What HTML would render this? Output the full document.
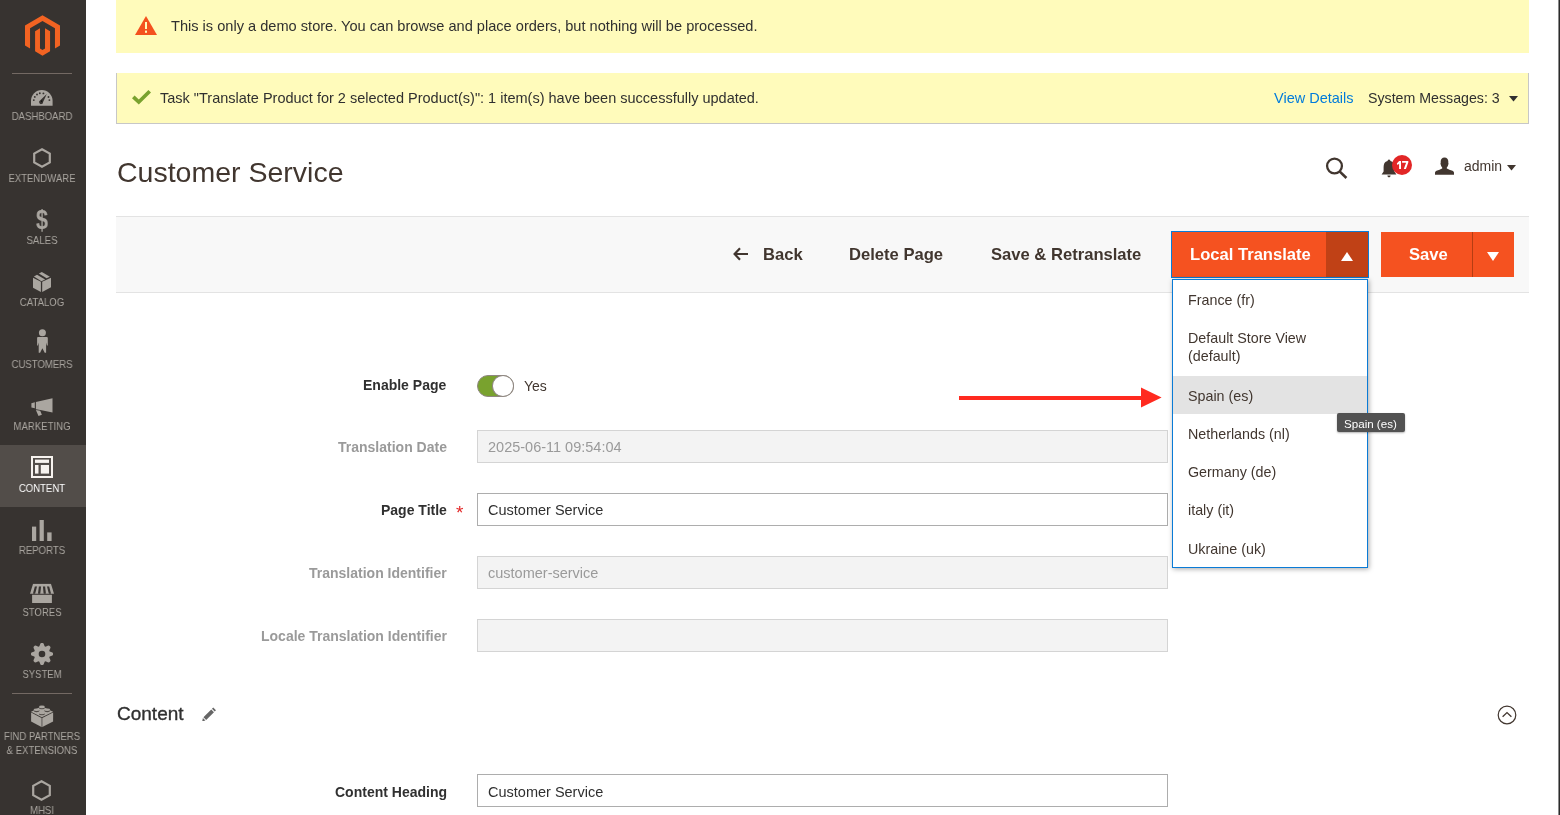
<!DOCTYPE html>
<html><head><meta charset="utf-8"><title>Customer Service</title>
<style>
html,body{margin:0;padding:0;}
body{width:1560px;height:815px;overflow:hidden;position:relative;background:#fff;font-family:"Liberation Sans", sans-serif;}
.t{position:absolute;line-height:1;white-space:nowrap;will-change:transform;}
.r{position:absolute;}
</style></head><body>
<div class="r" style="left:0px;top:0px;width:86px;height:815px;background:#373330;"></div>
<svg class="r" style="left:25px;top:15px;" width="35" height="41" viewBox="0 0 25 28.8"><path fill="#f26322" d="M12.5 0L0 7.2V21.6L3.6 23.7V9.2L12.5 4.1L21.4 9.2V23.7L25 21.6V7.2Z M14.3 23.6L12.5 24.7L10.7 23.6V9.2L7.2 11.3V25.7L12.5 28.8L17.9 25.7V11.3L14.3 9.2Z"/></svg>
<div class="r" style="left:12px;top:73px;width:60px;height:1px;background:#736963;"></div>
<div class="r" style="left:0px;top:445px;width:86px;height:62px;background:#524d49;"></div>
<div class="r" style="left:12px;top:693px;width:60px;height:1px;background:#736963;"></div>
<div class="t" style="top:110.89px;font-size:11px;font-weight:normal;color:#aaa6a0;left:-108.00px;width:300px;text-align:center;transform:scaleX(0.87);">DASHBOARD</div>
<div class="t" style="top:172.89px;font-size:11px;font-weight:normal;color:#aaa6a0;left:-108.00px;width:300px;text-align:center;transform:scaleX(0.87);">EXTENDWARE</div>
<div class="t" style="top:234.89px;font-size:11px;font-weight:normal;color:#aaa6a0;left:-108.00px;width:300px;text-align:center;transform:scaleX(0.87);">SALES</div>
<div class="t" style="top:296.89px;font-size:11px;font-weight:normal;color:#aaa6a0;left:-108.00px;width:300px;text-align:center;transform:scaleX(0.87);">CATALOG</div>
<div class="t" style="top:358.89px;font-size:11px;font-weight:normal;color:#aaa6a0;left:-108.00px;width:300px;text-align:center;transform:scaleX(0.87);">CUSTOMERS</div>
<div class="t" style="top:420.89px;font-size:11px;font-weight:normal;color:#aaa6a0;left:-108.00px;width:300px;text-align:center;transform:scaleX(0.87);">MARKETING</div>
<div class="t" style="top:482.89px;font-size:11px;font-weight:normal;color:#ffffff;left:-108.00px;width:300px;text-align:center;transform:scaleX(0.87);">CONTENT</div>
<div class="t" style="top:544.89px;font-size:11px;font-weight:normal;color:#aaa6a0;left:-108.00px;width:300px;text-align:center;transform:scaleX(0.87);">REPORTS</div>
<div class="t" style="top:606.89px;font-size:11px;font-weight:normal;color:#aaa6a0;left:-108.00px;width:300px;text-align:center;transform:scaleX(0.87);">STORES</div>
<div class="t" style="top:668.89px;font-size:11px;font-weight:normal;color:#aaa6a0;left:-108.00px;width:300px;text-align:center;transform:scaleX(0.87);">SYSTEM</div>
<div class="t" style="top:730.89px;font-size:11px;font-weight:normal;color:#aaa6a0;left:-108.00px;width:300px;text-align:center;transform:scaleX(0.87);">FIND PARTNERS</div>
<div class="t" style="top:744.89px;font-size:11px;font-weight:normal;color:#aaa6a0;left:-108.00px;width:300px;text-align:center;transform:scaleX(0.87);">&amp; EXTENSIONS</div>
<div class="t" style="top:804.89px;font-size:11px;font-weight:normal;color:#aaa6a0;left:-108.00px;width:300px;text-align:center;transform:scaleX(0.87);">MHSI</div>
<svg class="r" style="left:31px;top:90px;" width="22" height="16" viewBox="0 0 22 16"><path fill="#aaa6a0" d="M0 15.8V10.8A10.8 10.8 0 0 1 21.6 10.8V15.8Z"/><g fill="#373330"><circle cx="2.8" cy="10.1" r="0.95"/><circle cx="3.8" cy="6.9" r="0.95"/><circle cx="6" cy="4.5" r="0.95"/><circle cx="8.8" cy="3.2" r="0.95"/><circle cx="12.4" cy="3.4" r="0.95"/><circle cx="17.5" cy="7" r="0.95"/><circle cx="18.4" cy="10.1" r="0.95"/><path d="M15.8 4L9.3 10.3A2 2 0 1 0 12.1 11.9Z"/></g><circle cx="10.6" cy="11.1" r="0.7" fill="{IC}"/></svg>
<svg class="r" style="left:33px;top:148px;" width="18" height="20" viewBox="0 0 18 20"><path fill="none" stroke="#aaa6a0" stroke-width="2.2" d="M9 1.3L16.8 5.6V14.4L9 18.7L1.2 14.4V5.6Z"/></svg>
<div class="t" style="top:206.64px;font-size:27px;font-weight:bold;color:#aaa6a0;left:-108.40px;width:300px;text-align:center;transform:scaleX(0.8);">$</div>
<svg class="r" style="left:32px;top:271px;" width="20" height="22" viewBox="0 0 20 22"><g fill="#aaa6a0"><path d="M1 6.8L8.9 10.8V20.9L1 16.7Z"/><path d="M10.2 10.8L19 6.8V16.3L10.2 20.9Z"/><path d="M1.9 5.5L5 3.8L13.1 8.6L9.4 10.3Z"/><path d="M6.9 2.5L9.8 0.9L17.9 5.7L14.6 7.3Z"/></g></svg>
<svg class="r" style="left:36px;top:329px;" width="13" height="24" viewBox="0 0 13 24"><g fill="#aaa6a0"><circle cx="6.4" cy="3.7" r="3.5"/><path d="M1.1 8.9Q1.1 8 2 8H10.8Q11.8 8 11.8 8.9V16.6L10.9 16.4L10.1 13.6V23.8H8.7L6.4 19.2L4.1 23.8H2.7V13.6L1.9 16.4L1.1 16.6Z"/></g></svg>
<svg class="r" style="left:31px;top:398px;" width="22" height="18" viewBox="0 0 22 18"><g fill="#aaa6a0"><path d="M0.4 5.3L3.8 4.3V10.2L0.4 9.4Z"/><path d="M4.9 4L21.5 0.2V14.6L9.4 12L4.9 11.2Z"/><path d="M4.9 11.9L9.2 12.7L10.9 16.8L7.5 18Z"/></g></svg>
<svg class="r" style="left:31px;top:456px;" width="22" height="22" viewBox="0 0 22 22"><g fill="#f7f3ef"><path fill-rule="evenodd" d="M0 0H22V22H0Z M2 2V20H20V2Z"/><rect x="4" y="3.6" width="14" height="3.3"/><rect x="4" y="9" width="3.5" height="8.6"/><rect x="9.8" y="9" width="8.2" height="8.6"/></g></svg>
<svg class="r" style="left:32px;top:520px;" width="20" height="21" viewBox="0 0 20 21"><g fill="#aaa6a0"><rect x="0" y="6.6" width="4.2" height="14.4"/><rect x="7.6" y="0" width="4.2" height="21"/><rect x="15.2" y="12.4" width="4.4" height="8.6"/></g></svg>
<svg class="r" style="left:30px;top:583px;" width="25" height="21" viewBox="0 0 25 21"><g fill="#aaa6a0"><path d="M3 0.9H21L24 10.8H0Z"/><rect x="2.1" y="11.8" width="19.8" height="8.2"/></g><g fill="#373330"><path d="M4.9 3.3H7.1L5.2 10.4Q4.2 11.2 3 10.4Z"/><path d="M8.9 3.3H11.1L10.3 10.4Q9.1 11.2 8 10.4Z"/><path d="M12.9 3.3H15.1L15.9 10.4Q14.8 11.2 13.6 10.4Z"/><path d="M16.9 3.3H19.1L21 10.4Q19.9 11.2 18.8 10.4Z"/></g><rect x="3" y="0.9" width="18" height="2.4" fill="#aaa6a0"/></svg>
<svg class="r" style="left:31px;top:643.2px;" width="22" height="22" viewBox="0 0 22 22"><path fill="#aaa6a0" fill-rule="evenodd" d="M8.38 3.34L9.42 0.52L10.33 -0.08L11.67 -0.08L12.58 0.52L13.62 3.34L14.56 3.73L17.29 2.47L18.36 2.69L19.31 3.64L19.53 4.71L18.27 7.44L18.66 8.38L21.48 9.42L22.08 10.33L22.08 11.67L21.48 12.58L18.66 13.62L18.27 14.56L19.53 17.29L19.31 18.36L18.36 19.31L17.29 19.53L14.56 18.27L13.62 18.66L12.58 21.48L11.67 22.08L10.33 22.08L9.42 21.48L8.38 18.66L7.44 18.27L4.71 19.53L3.64 19.31L2.69 18.36L2.47 17.29L3.73 14.56L3.34 13.62L0.52 12.58L-0.08 11.67L-0.08 10.33L0.52 9.42L3.34 8.38L3.73 7.44L2.47 4.71L2.69 3.64L3.64 2.69L4.71 2.47L7.44 3.73Z M11 7.7A3.3 3.3 0 1 0 11 14.3A3.3 3.3 0 1 0 11 7.7Z"/></svg>
<svg class="r" style="left:30px;top:705px;" width="24" height="23" viewBox="0 0 24 23"><g fill="#aaa6a0"><path d="M1.1 7.4L11.5 12.9V22.1L1.1 16.6Z"/><path d="M12.3 12.9L23.1 7.4V16.6L12.3 22.1Z"/><path d="M1.1 6.7L11.7 1.2L23.1 6.7L11.9 12.3Z"/></g><rect x="11.5" y="12.9" width="0.8" height="9.2" fill="#8a8581"/><g fill="#4f4a46"><ellipse cx="11.9" cy="2.9" rx="2.95" ry="1.35"/><ellipse cx="6.6" cy="5.8" rx="2.95" ry="1.35"/><ellipse cx="17.2" cy="5.8" rx="2.95" ry="1.35"/><ellipse cx="11.9" cy="9" rx="2.95" ry="1.35"/></g><g fill="#aaa6a0"><ellipse cx="11.9" cy="1.9" rx="2.95" ry="1.3"/><ellipse cx="6.6" cy="4.8" rx="2.95" ry="1.3"/><ellipse cx="17.2" cy="4.8" rx="2.95" ry="1.3"/><ellipse cx="11.9" cy="8" rx="2.95" ry="1.3"/></g></svg>
<svg class="r" style="left:32px;top:780px;" width="19" height="21" viewBox="0 0 19 21"><path fill="none" stroke="#aaa6a0" stroke-width="2.2" d="M9.5 1.3L17.8 5.9V15.1L9.5 19.7L1.2 15.1V5.9Z"/></svg>
<div class="r" style="left:1558px;top:0px;width:1px;height:815px;background:#8a8a8a;"></div>
<div class="r" style="left:1559px;top:0px;width:1px;height:815px;background:#2b2b2b;"></div>
<div class="r" style="left:116px;top:0px;width:1413px;height:53px;background:#fffbbb;"></div>
<svg class="r" style="left:135px;top:16px;" width="22" height="19" viewBox="0 0 22 19"><path fill="#f4511e" d="M11 0L22 19H0Z"/><rect x="10" y="6" width="2" height="7" fill="#fffbbb"/><rect x="10" y="14.6" width="2" height="2.2" fill="#fffbbb"/></svg>
<div class="t" style="top:19.04px;font-size:14.6px;font-weight:normal;color:#303030;left:171.30px;">This is only a demo store. You can browse and place orders, but nothing will be processed.</div>
<div class="r" style="left:116px;top:73px;width:1413px;height:51px;background:#fffbbb;border-left:1px solid #c7c7c7;border-right:1px solid #c7c7c7;border-bottom:1px solid #c7c7c7;box-sizing:border-box;"></div>
<svg class="r" style="left:132px;top:90px;" width="19" height="15" viewBox="0 0 19 15"><path fill="#79a22e" d="M0 8.2L2.6 5.6L6.8 9.6L16.4 0L19 2.6L6.8 14.6Z"/></svg>
<div class="t" style="top:90.63px;font-size:14.5px;font-weight:normal;color:#303030;left:160.30px;">Task "Translate Product for 2 selected Product(s)": 1 item(s) have been successfully updated.</div>
<div class="t" style="top:90.93px;font-size:14.5px;font-weight:normal;color:#007bdb;left:1274.40px;">View Details</div>
<div class="t" style="top:91.18px;font-size:14.2px;font-weight:normal;color:#303030;left:1368.30px;">System Messages: 3</div>
<svg class="r" style="left:1509px;top:96px;" width="9" height="6" viewBox="0 0 9 6"><path fill="#303030" d="M0 0H9L4.5 5.5Z"/></svg>
<div class="t" style="top:157.57px;font-size:28.5px;font-weight:normal;color:#41362f;left:116.60px;">Customer Service</div>
<svg class="r" style="left:1325px;top:157px;" width="23" height="22" viewBox="0 0 23 22"><circle cx="9.5" cy="9" r="7.4" fill="none" stroke="#41362f" stroke-width="2.3"/><path d="M14.6 14.4L21.4 21" stroke="#41362f" stroke-width="2.6"/></svg>
<svg class="r" style="left:1381px;top:159px;" width="17" height="19" viewBox="0 0 17 19"><path fill="#41362f" d="M8 0.6C9 0.6 9.4 1.4 9.4 2C12.4 2.6 13.4 5 13.4 8V12.6L15.4 15.4H0.6L2.6 12.6V8C2.6 5 3.6 2.6 6.6 2C6.6 1.4 7 0.6 8 0.6Z M6.4 16.4H9.6C9.6 17.4 8.9 18.2 8 18.2C7.1 18.2 6.4 17.4 6.4 16.4Z"/></svg>
<div class="r" style="left:1392px;top:155px;width:20px;height:20px;border-radius:50%;background:#e22626;"></div>
<svg class="r" style="left:1396px;top:160px;" width="13" height="10" viewBox="0 0 13 10"><path fill="#fff" d="M3.1 1H5V8.9H3.1V3.7L1.5 4.9L0.8 3.6Z M6.1 1H12.3V2.5L9.9 8.9H7.8L10.1 2.8H6.1Z"/></svg>
<svg class="r" style="left:1434px;top:157px;" width="21" height="18" viewBox="0 0 21 18"><path fill="#41362f" d="M10.5 0.5C13 0.5 14.3 2.2 14.3 4.6V6C14.6 6.2 14.6 7 14.3 7.4C14 8.6 13.6 9.6 12.8 10.4V11.4C14.2 12.2 16.5 13 18.5 13.8C19.6 14.3 20 15 20 16V17.8H1V16C1 15 1.4 14.3 2.5 13.8C4.5 13 6.8 12.2 8.2 11.4V10.4C7.4 9.6 7 8.6 6.7 7.4C6.4 7 6.4 6.2 6.7 6V4.6C6.7 2.2 8 0.5 10.5 0.5Z"/></svg>
<div class="t" style="top:158.75px;font-size:14px;font-weight:normal;color:#41362f;left:1463.50px;">admin</div>
<svg class="r" style="left:1507px;top:165px;" width="9" height="6" viewBox="0 0 9 6"><path fill="#41362f" d="M0 0H9L4.5 5.5Z"/></svg>
<div class="r" style="left:116px;top:216px;width:1413px;height:77px;background:#f8f8f8;border-top:1px solid #e3e3e3;border-bottom:1px solid #e3e3e3;box-sizing:border-box;"></div>
<svg class="r" style="left:733px;top:247px;" width="16" height="14" viewBox="0 0 16 14"><path d="M7 1.2L1.6 7L7 12.8 M1.8 7H15" fill="none" stroke="#41362f" stroke-width="2.2"/></svg>
<div class="t" style="top:246.95px;font-size:16.6px;font-weight:bold;color:#41362f;left:762.80px;">Back</div>
<div class="t" style="top:246.95px;font-size:16.6px;font-weight:bold;color:#41362f;left:848.50px;">Delete Page</div>
<div class="t" style="top:246.95px;font-size:16.6px;font-weight:bold;color:#41362f;left:990.80px;">Save &amp; Retranslate</div>
<div class="r" style="left:1171px;top:231px;width:198px;height:47px;background:#f55220;border:1px solid #0a7bd6;box-sizing:border-box;"></div>
<div class="r" style="left:1326px;top:232px;width:42px;height:45px;background:#c04116;"></div>
<div class="t" style="top:247.15px;font-size:16.6px;font-weight:bold;color:#ffffff;left:1190.30px;">Local Translate</div>
<svg class="r" style="left:1341px;top:252px;" width="12" height="9" viewBox="0 0 12 9"><path fill="#fff" d="M6 0L12 9H0Z"/></svg>
<div class="r" style="left:1381px;top:232px;width:133px;height:45px;background:#f55220;"></div>
<div class="r" style="left:1472px;top:232px;width:1px;height:45px;background:#b53d12;"></div>
<div class="t" style="top:246.95px;font-size:16.6px;font-weight:bold;color:#ffffff;left:1408.70px;">Save</div>
<svg class="r" style="left:1487px;top:252px;" width="12" height="9" viewBox="0 0 12 9"><path fill="#fff" d="M0 0H12L6 9Z"/></svg>
<div class="t" style="top:378.45px;font-size:14px;font-weight:bold;color:#303030;right:1113.50px;text-align:right;">Enable Page</div>
<div class="r" style="left:477px;top:375px;width:37px;height:22px;border-radius:11px;background:#79a22e;border:1px solid #8f8781;box-sizing:border-box;"></div>
<div class="r" style="left:491.6px;top:375px;width:22.4px;height:22px;border-radius:50%;background:#fff;border:1px solid #8f8781;box-sizing:border-box;"></div>
<div class="t" style="top:379.15px;font-size:14px;font-weight:normal;color:#41362f;left:524.00px;">Yes</div>
<div class="t" style="top:440.15px;font-size:14px;font-weight:bold;color:#9a9a9a;right:1113.50px;text-align:right;">Translation Date</div>
<div class="r" style="left:477px;top:430px;width:691px;height:33px;background:#f3f3f3;border:1px solid #d4d4d4;box-sizing:border-box;"></div>
<div class="t" style="top:439.93px;font-size:14.5px;font-weight:normal;color:#9a9a9a;left:488.00px;">2025-06-11 09:54:04</div>
<div class="t" style="top:502.95px;font-size:14px;font-weight:bold;color:#303030;right:1113.50px;text-align:right;">Page Title</div>
<div class="t" style="top:502.92px;font-size:19px;font-weight:normal;color:#e22626;left:456.30px;">*</div>
<div class="r" style="left:477px;top:493px;width:691px;height:33px;background:#fff;border:1px solid #adadad;box-sizing:border-box;"></div>
<div class="t" style="top:502.73px;font-size:14.5px;font-weight:normal;color:#303030;left:488.00px;">Customer Service</div>
<div class="t" style="top:566.45px;font-size:14px;font-weight:bold;color:#9a9a9a;right:1113.50px;text-align:right;">Translation Identifier</div>
<div class="r" style="left:477px;top:556px;width:691px;height:33px;background:#f3f3f3;border:1px solid #d4d4d4;box-sizing:border-box;"></div>
<div class="t" style="top:566.03px;font-size:14.5px;font-weight:normal;color:#9a9a9a;left:488.00px;">customer-service</div>
<div class="t" style="top:629.45px;font-size:14px;font-weight:bold;color:#9a9a9a;right:1113.50px;text-align:right;">Locale Translation Identifier</div>
<div class="r" style="left:477px;top:619px;width:691px;height:33px;background:#f3f3f3;border:1px solid #d4d4d4;box-sizing:border-box;"></div>
<div class="t" style="top:704.22px;font-size:19px;font-weight:normal;color:#303030;left:116.70px;-webkit-text-stroke:0.35px #303030;">Content</div>
<svg class="r" style="left:202px;top:706.5px;" width="14.5" height="14.5" viewBox="0 0 16 16"><path fill="#666" d="M12.4 0.6L15.4 3.6L14 5L11 2Z M10.2 2.8L13.2 5.8L4.6 14.4L1.6 11.4Z M1 12.2L3.8 15L0.2 15.8Z"/></svg>
<svg class="r" style="left:1497px;top:705px;" width="20" height="20" viewBox="0 0 20 20"><circle cx="10" cy="10" r="8.8" fill="none" stroke="#41362f" stroke-width="1.2"/><path d="M5.6 11.8L10 7.6L14.4 11.8" fill="none" stroke="#41362f" stroke-width="1.3"/></svg>
<div class="t" style="top:784.85px;font-size:14px;font-weight:bold;color:#303030;right:1113.30px;text-align:right;">Content Heading</div>
<div class="r" style="left:477px;top:774px;width:691px;height:33px;background:#fff;border:1px solid #adadad;box-sizing:border-box;"></div>
<div class="t" style="top:784.73px;font-size:14.5px;font-weight:normal;color:#303030;left:488.00px;">Customer Service</div>
<div class="r" style="left:959px;top:396px;width:183px;height:4px;background:#ff2a1f;"></div>
<svg class="r" style="left:1141px;top:387px;" width="21" height="21" viewBox="0 0 21 21"><path fill="#ff2a1f" d="M0 0.6L20.6 10.5L0 20.4Z"/></svg>
<div class="r" style="left:1172px;top:279px;width:196px;height:289px;background:#fff;border:1px solid #0a7bd6;box-sizing:border-box;box-shadow:1px 1px 5px rgba(0,0,0,0.35);"></div>
<div class="r" style="left:1173px;top:376px;width:194px;height:38px;background:#e3e3e3;"></div>
<div class="t" style="top:293.10px;font-size:14.3px;font-weight:normal;color:#41362f;left:1188.00px;">France (fr)</div>
<div class="t" style="top:331.10px;font-size:14.3px;font-weight:normal;color:#41362f;left:1188.00px;">Default Store View</div>
<div class="t" style="top:349.40px;font-size:14.3px;font-weight:normal;color:#41362f;left:1188.00px;">(default)</div>
<div class="t" style="top:388.90px;font-size:14.3px;font-weight:normal;color:#41362f;left:1188.00px;">Spain (es)</div>
<div class="t" style="top:427.30px;font-size:14.3px;font-weight:normal;color:#41362f;left:1188.00px;">Netherlands (nl)</div>
<div class="t" style="top:465.30px;font-size:14.3px;font-weight:normal;color:#41362f;left:1188.00px;">Germany (de)</div>
<div class="t" style="top:503.20px;font-size:14.3px;font-weight:normal;color:#41362f;left:1188.00px;">italy (it)</div>
<div class="t" style="top:541.60px;font-size:14.3px;font-weight:normal;color:#41362f;left:1188.00px;">Ukraine (uk)</div>
<div class="r" style="left:1337px;top:413px;width:68px;height:19px;background:#525252;border-radius:2px;box-shadow:0 1px 2px rgba(0,0,0,0.3);"></div>
<div class="t" style="top:418.38px;font-size:11.6px;font-weight:normal;color:#ffffff;left:1344.00px;">Spain (es)</div>
</body></html>
